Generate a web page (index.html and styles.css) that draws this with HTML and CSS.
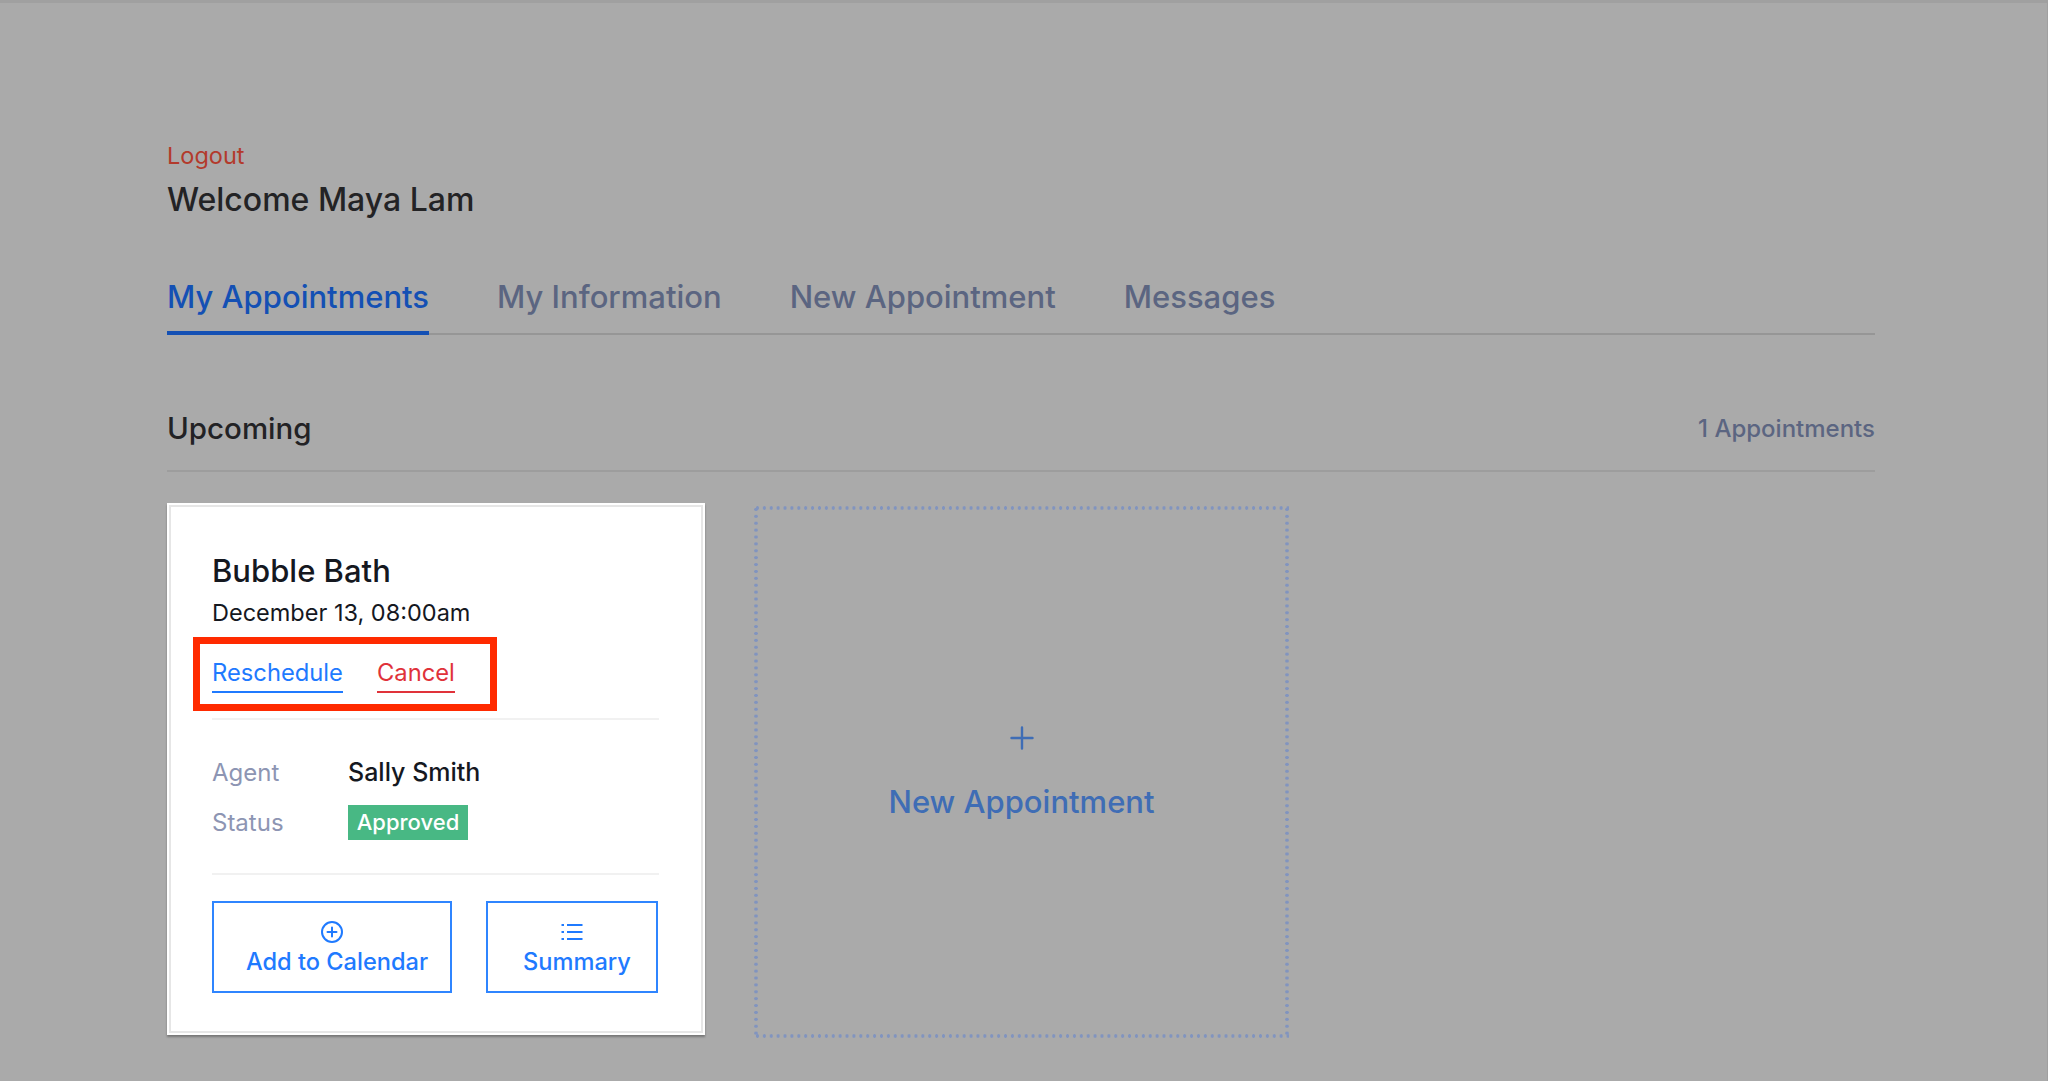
FILE: index.html
```html
<!DOCTYPE html>
<html lang="en">
<head>
<meta charset="utf-8">
<title>My Appointments</title>
<link rel="stylesheet" href="styles.css">
</head>
<body>
<div class="page">
  <header class="head">
    <a class="logout">Logout</a>
    <h1 class="welcome">Welcome Maya Lam</h1>
  </header>
  <nav class="tabs">
    <a class="tab tab-active">My Appointments</a>
    <a class="tab">My Information</a>
    <a class="tab">New Appointment</a>
    <a class="tab">Messages</a>
  </nav>
  <div class="section-head">
    <h2 class="section-title">Upcoming</h2>
    <span class="section-count">1 Appointments</span>
  </div>
  <div class="cards">
    <article class="card">
      <h3 class="card-title">Bubble Bath</h3>
      <p class="card-date">December 13, 08:00am</p>
      <div class="actions">
        <a class="action action-blue">Reschedule</a>
        <a class="action action-red">Cancel</a>
      </div>
      <div class="details">
        <div class="row"><span class="label">Agent</span><span class="value">Sally Smith</span></div>
        <div class="row row-status"><span class="label">Status</span><span class="badge">Approved</span></div>
      </div>
      <div class="buttons">
        <a class="btn btn-add">
          <svg class="icon" width="24" height="24" viewBox="0 0 24 24" fill="none" stroke="currentColor" stroke-width="2" stroke-linecap="round"><circle cx="12" cy="12" r="10"/><path d="M12 7.500v9M7.500 12h9"/></svg>
          <span class="btn-label">Add to Calendar</span>
        </a>
        <a class="btn btn-summary">
          <svg class="icon" width="24" height="24" viewBox="0 0 24 24" fill="none" stroke="currentColor" stroke-width="2"><path d="M7 5h15.500M7 12h15.500M7 19h15.500M1.500 5h2.500M1.500 12h2.500M1.500 19h2.500"/></svg>
          <span class="btn-label">Summary</span>
        </a>
      </div>
    </article>
    <a class="new-card">
      <svg class="new-plus" width="24" height="24" viewBox="0 0 24 24" fill="none" stroke="currentColor" stroke-width="2.400" stroke-linecap="round"><path d="M12 1.500v21M1.500 12h21"/></svg>
      <span class="new-label">New Appointment</span>
    </a>
  </div>
</div>
</body>
</html>
```
FILE: styles.css
```css
*, *::after { box-sizing: border-box; }
html, body { margin: 0; padding: 0; }
body {
  background: #aaaaaa;
  font-family: Inter, "Liberation Sans", sans-serif;
  font-size: 24px;
  color: #1f1f22;
}
.page {
  height: 1081px;
  overflow: hidden;
  border-top: 3px solid #a0a0a0;
  border-right: 1px solid #a0a0a0;
  padding: 137px 172px 0 167px;
}
.head { display: flex; flex-direction: column; align-items: flex-start; }
.logout { line-height: 32px; color: #b33a2c; font-size: 23.5px; }
.welcome { margin: 6px 0 0; font-size: 32px; line-height: 44px; font-weight: 500; color: #232325; }
.tabs {
  display: flex;
  gap: 68px;
  margin-top: 55px;
  border-bottom: 2px solid #969696;
}
.tab {
  font-size: 31px;
  line-height: 40px;
  font-weight: 450;
  color: #5b6581;
  padding-bottom: 15px;
  margin-bottom: -2px;
}
.tab-active { color: #1450b4; border-bottom: 4px solid #1450b4; padding-bottom: 14px; }
.section-head {
  display: flex;
  justify-content: space-between;
  align-items: center;
  margin-top: 73px;
  padding-bottom: 22px;
  border-bottom: 2px solid #9d9d9d;
}
.section-title { margin: 0; font-size: 29.500px; line-height: 40px; font-weight: 500; color: #222225; }
.section-count { font-size: 24px; font-weight: 450; color: #5b6581; }
.cards { display: flex; gap: 49px; margin-top: 31px; align-items: flex-start; }
.card {
  width: 538px;
  height: 532px;
  background: #fff;
  border: 2px solid #fff;
  box-shadow: inset 0 0 0 2px #e6e6e6, 0 2px 2px rgba(0, 0, 0, 0.3);
  padding: 44px 44px 0 43px;
  display: flex;
  flex-direction: column;
}
.card-title { margin: 0; font-size: 31px; line-height: 44px; font-weight: 500; color: #15181f; }
.card-date { margin: 3px 0 0; line-height: 34px; font-size: 23.500px; color: #15181f; }
.actions {
  position: relative;
  display: flex;
  gap: 34px;
  margin-top: 27px;
  padding-bottom: 25px;
  border-bottom: 2px solid #f1f1f1;
}
.actions::after {
  content: "";
  position: absolute;
  left: -19px;
  top: -20px;
  width: 304px;
  height: 74px;
  border: 7px solid #ff2a00;
}
.action { font-size: 23.750px; line-height: 32px; padding-bottom: 2px; border-bottom: 2px solid currentColor; }
.action-blue { color: #1f7aff; }
.action-red { color: #e0323a; }
.details { display: flex; flex-direction: column; margin-top: 35px; gap: 16px; padding-bottom: 33px; border-bottom: 2px solid #f1f1f1; }
.row { display: flex; align-items: center; height: 34px; }
.row-status { height: 35px; }
.label { width: 136px; color: #8d95b3; }
.value { font-size: 25px; color: #15181f; font-weight: 500; }
.badge {
  width: 120px;
  height: 35px;
  background: #48b884;
  color: #fff;
  font-size: 22px;
  font-weight: 500;
  text-align: center;
  line-height: 35px;
}
.buttons { display: flex; gap: 34px; margin-top: 26px; }
.btn {
  height: 92px;
  border: 2px solid #2f85ff;
  color: #1f7aff;
  display: flex;
  flex-direction: column;
  align-items: center;
  padding-top: 17px;
}
.btn-add { width: 240px; }
.btn-summary { width: 172px; }
.icon { display: block; }
.btn-label { font-size: 23.600px; font-weight: 450; line-height: 32px; margin-top: 2px; padding-left: 10px; }
.new-card {
  width: 535px;
  height: 532px;
  margin-top: 3px;
  color: #3f6db5;
  display: flex;
  flex-direction: column;
  align-items: center;
  padding-top: 220px;
  background-image:
    radial-gradient(circle closest-side, #8194bf 75%, transparent 100%),
    radial-gradient(circle closest-side, #8194bf 75%, transparent 100%),
    radial-gradient(circle closest-side, #8194bf 75%, transparent 100%),
    radial-gradient(circle closest-side, #8194bf 75%, transparent 100%);
  background-size: 6.9px 4px, 6.9px 4px, 4px 6.9px, 4px 6.9px;
  background-position: 0 0, 0 100%, 0 0, 100% 0;
  background-repeat: repeat-x, repeat-x, repeat-y, repeat-y;
}
.new-plus { display: block; }
.new-label { margin-top: 32px; font-size: 31px; line-height: 40px; font-weight: 450; }
```
